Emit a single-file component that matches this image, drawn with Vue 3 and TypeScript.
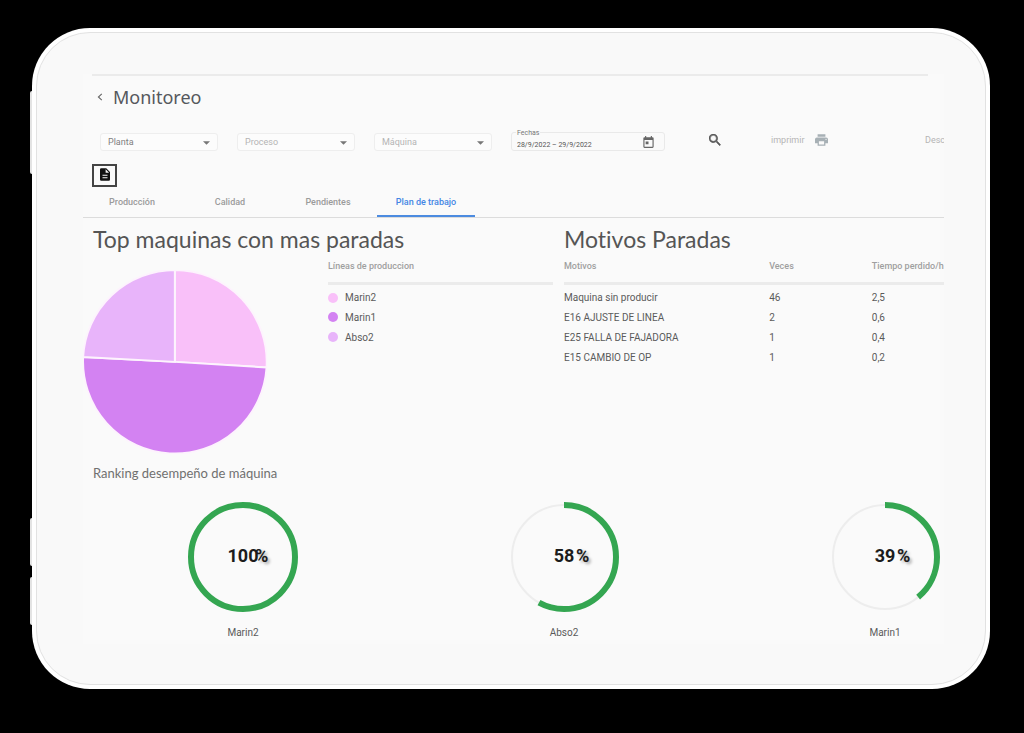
<script setup lang="ts">
import { ref } from 'vue'

interface Filter { id: string; label: string; active: boolean }
interface Slice { name: string; value: number; color: string }
interface Stop { reason: string; times: number; hours: string }
interface Rank { name: string; percent: number }

const filters: Filter[] = [
  { id: 'planta', label: 'Planta', active: true },
  { id: 'proceso', label: 'Proceso', active: false },
  { id: 'maquina', label: 'Máquina', active: false },
]
const dates = ref('28/9/2022 – 29/9/2022')

const tabs = ['Producción', 'Calidad', 'Pendientes', 'Plan de trabajo']
const activeTab = ref('Plan de trabajo')

const slices: Slice[] = [
  { name: 'Marin2', value: 93.5, color: '#f9c0f9' },
  { name: 'Marin1', value: 179.5, color: '#d382f2' },
  { name: 'Abso2', value: 87, color: '#e8b4fa' },
]
const stops: Stop[] = [
  { reason: 'Maquina sin producir', times: 46, hours: '2,5' },
  { reason: 'E16 AJUSTE DE LINEA', times: 2, hours: '0,6' },
  { reason: 'E25 FALLA DE FAJADORA', times: 1, hours: '0,4' },
  { reason: 'E15 CAMBIO DE OP', times: 1, hours: '0,2' },
]
const ranking: Rank[] = [
  { name: 'Marin2', percent: 100 },
  { name: 'Abso2', percent: 58 },
  { name: 'Marin1', percent: 39 },
]

const point = (deg: number) => {
  const a = ((deg - 90) * Math.PI) / 180
  return `${(92 + 92 * Math.cos(a)).toFixed(2)} ${(92 + 92 * Math.sin(a)).toFixed(2)}`
}
let start = 0
const pie = slices.map((s) => {
  const end = start + s.value
  const d = `M92 92L${point(start)}A92 92 0 ${s.value > 180 ? 1 : 0} 1 ${point(end)}Z`
  start = end
  return { d, color: s.color, name: s.name }
})
</script>

<template>
  <div class="device">
    <i class="key key-power"></i>
    <i class="key key-up"></i>
    <i class="key key-down"></i>
    <div class="bezel">
      <main class="screen">
        <header class="head">
          <button class="back" type="button" aria-label="Volver">
            <svg viewBox="0 0 6 8" width="6" height="8"><path d="M4.8 .8L1.4 4l3.4 3.2" fill="none" stroke="#666" stroke-width="1.1" /></svg>
          </button>
          <h1>Monitoreo</h1>
        </header>

        <form class="toolbar" @submit.prevent>
          <div v-for="f in filters" :key="f.id" class="pick" :class="{ active: f.active }">
            <select :id="f.id" :aria-label="f.label"><option>{{ f.label }}</option></select>
            <svg class="caret" viewBox="0 0 8 4" width="7" height="4"><path d="M0 0h8L4 4z" fill="currentColor" /></svg>
          </div>
          <div class="dates">
            <label for="fechas">Fechas</label>
            <input id="fechas" v-model="dates" type="text" />
            <button type="button" aria-label="Abrir calendario">
              <svg viewBox="3 1 18 21" width="11" height="12"><path fill="#666" d="M19 3h-1V1h-2v2H8V1H6v2H5a2 2 0 0 0-2 2v15a2 2 0 0 0 2 2h14a2 2 0 0 0 2-2V5a2 2 0 0 0-2-2zm0 17H5V8h14zM7 10.500h5v5H7z" /></svg>
            </button>
          </div>
          <div class="actions">
            <button class="search" type="button" aria-label="Buscar">
              <svg viewBox="3 3 18 18" width="12" height="12"><path fill="#585858" stroke="#585858" stroke-width=".8" d="M15.500 14h-.8l-.3-.3A6.500 6.500 0 1 0 13.700 14.400l.3.300v.8l5 5 1.500-1.500zm-6 0a4.500 4.500 0 1 1 0-9 4.500 4.500 0 0 1 0 9z" /></svg>
            </button>
            <button class="print" type="button">
              imprimir
              <svg viewBox="2 3 20 18" width="13" height="12"><path fill="#a7b0b5" d="M19 8H5a3 3 0 0 0-3 3v6h4v4h12v-4h4v-6a3 3 0 0 0-3-3zm-3 11H8v-5h8zm3-7a1 1 0 1 1 0-2 1 1 0 0 1 0 2zM18 3H6v4h12z" /></svg>
            </button>
            <button class="download" type="button">Descargar</button>
          </div>
        </form>

        <button class="report" type="button" aria-label="Reporte">
          <svg viewBox="4 2 16 20" width="10" height="13"><path fill="#111" d="M14 2H6a2 2 0 0 0-2 2v16a2 2 0 0 0 2 2h12a2 2 0 0 0 2-2V8zm2 16H8v-1.800h8zm0-4H8v-1.800h8zm-3-5V3.500L18.500 9z" /></svg>
        </button>

        <nav class="tabs" role="tablist">
          <button
            v-for="t in tabs" :key="t" type="button" role="tab"
            :aria-selected="t === activeTab" :class="{ on: t === activeTab }"
            @click="activeTab = t"
          >{{ t }}</button>
        </nav>

        <div class="panels">
          <section>
            <h2 class="inset">Top maquinas con mas paradas</h2>
            <div class="split">
              <svg class="pie" viewBox="0 0 184 184" role="img" aria-label="Paradas por línea">
                <path v-for="p in pie" :key="p.name" :d="p.d" :fill="p.color" stroke="#fdf3fd" stroke-width="2" />
              </svg>
              <table>
                <thead><tr><th>Líneas de produccion</th></tr></thead>
                <tbody>
                  <tr v-for="s in slices" :key="s.name">
                    <td><span class="line"><svg viewBox="0 0 10 10" width="10" height="10"><circle cx="5" cy="5" r="5" :fill="s.color" /></svg>{{ s.name }}</span></td>
                  </tr>
                </tbody>
              </table>
            </div>
          </section>
          <section>
            <h2>Motivos Paradas</h2>
            <table>
              <thead><tr><th class="wide">Motivos</th><th class="mid">Veces</th><th>Tiempo perdido/h</th></tr></thead>
              <tbody>
                <tr v-for="s in stops" :key="s.reason">
                  <td>{{ s.reason }}</td><td>{{ s.times }}</td><td>{{ s.hours }}</td>
                </tr>
              </tbody>
            </table>
          </section>
        </div>

        <h3>Ranking desempeño de máquina</h3>
        <div class="rings">
          <figure v-for="r in ranking" :key="r.name">
            <svg viewBox="0 0 110 110" width="110" height="110">
              <circle cx="55" cy="55" r="52" fill="none" stroke="#ededed" stroke-width="2" />
              <circle
                cx="55" cy="55" r="52" fill="none" stroke="#34a651" stroke-width="6"
                pathLength="100" :stroke-dasharray="`${r.percent} ${100 - r.percent}`" transform="rotate(-90 55 55)"
              />
              <text class="num" x="55" y="60" text-anchor="middle">{{ r.percent }}</text>
              <text class="pct" x="67" y="60">%</text>
            </svg>
            <figcaption>{{ r.name }}</figcaption>
          </figure>
        </div>
      </main>
    </div>
  </div>
</template>

<style>
html, body { background: #000; }
body { margin: 0; }
</style>

<style scoped>
* { box-sizing: border-box; }
button { padding: 0; border: 0; background: none; font: inherit; color: inherit; cursor: pointer; }
svg { display: block; flex: none; }
.device {
  position: relative;
  margin: 28px 34px 44px 32px;
  padding: 4px;
  border-radius: 58px;
  background: #fff;
  font-family: Roboto, "Liberation Sans", sans-serif;
  font-size: 10px;
  color: #5a5a5a;
}
.key { position: absolute; left: -2px; width: 2px; background: #e4e4e4; border-radius: 2px 0 0 2px; }
.key-power { top: 63px; height: 83px; }
.key-up { top: 490px; height: 48px; }
.key-down { top: 549px; height: 48px; }
.bezel {
  padding: 41px 41px 40px 46px;
  border: 1px solid #e2e2e2;
  border-radius: 54px;
  background: #f9f9f9;
}
.screen { overflow: hidden; background: #fafafa; padding-bottom: 3px; }
.head {
  display: flex;
  align-items: center;
  gap: 10px;
  height: 44px;
  margin: 0 16px 0 9px;
  padding-left: 5px;
  border-top: 2px solid #ebebeb;
}
h1, h2, h3 { margin: 0; font-weight: 400; white-space: nowrap; }
h1 { font-family: "Noto Sans", sans-serif; font-size: 18px; line-height: 24px; color: #55585d; }
.toolbar {
  display: grid;
  grid-template-columns: repeat(3, minmax(0, 118fr)) minmax(0, 154fr) minmax(0, 260fr);
  gap: 19px;
  align-items: end;
  margin-top: 11px;
  padding-left: 17px;
  font-size: 9px;
}
.pick { position: relative; color: #b4b4b4; }
.pick.active { color: #808080; }
select {
  appearance: none;
  display: block;
  width: 100%;
  height: 18px;
  padding: 0 18px 0 7px;
  border: 1px solid #eee;
  border-radius: 3px;
  background: #fcfcfc;
  font: inherit;
  color: inherit;
}
.caret { position: absolute; right: 8px; top: 8px; color: #777; pointer-events: none; }
.dates {
  position: relative;
  display: flex;
  align-items: center;
  height: 19px;
  padding: 0 10px 0 5px;
  border: 1px solid #e9e9e9;
  border-radius: 3px;
}
.dates label { position: absolute; left: 4px; top: -4px; padding: 0 1px; background: #fafafa; font-size: 7px; line-height: 8px; color: #777; }
.dates input { flex: 1; min-width: 0; height: 12px; margin-top: 7px; padding: 0; border: 0; background: none; font: inherit; font-size: 7px; color: #555; }
.actions { display: grid; grid-template-columns: minmax(0, 87fr) minmax(0, 154fr) minmax(0, 19fr); align-items: center; height: 22px; white-space: nowrap; color: #b5b5b5; }
.search { justify-self: start; margin-left: 25px; }
.print { display: flex; align-items: center; gap: 10px; }
.download { justify-self: start; }
.report {
  display: flex;
  justify-content: center;
  align-items: flex-start;
  width: 25px;
  height: 23px;
  margin: 13px 0 0 9px;
  padding-top: 2px;
  border: 2px solid #444;
}
.tabs { display: flex; margin-top: 1px; border-bottom: 1px solid #dcdcdc; font-size: 9px; color: #9b9b9b; }
.tabs button { flex: 0 1 98px; height: 29px; border-bottom: 2px solid transparent; font-weight: 500; white-space: nowrap; }
.tabs .on { border-color: #4c8be0; color: #4486e4; }
.panels { display: grid; grid-template-columns: minmax(0, 470fr) minmax(0, 380fr); gap: 11px; }
h2 { padding-top: 7px; font-family: Lato, sans-serif; font-size: 23px; line-height: 28px; font-variant-ligatures: none; color: #555; }
h2.inset { padding-left: 10px; }
.split { display: grid; grid-template-columns: minmax(0, 245fr) minmax(0, 225fr); align-items: start; }
.pie { width: 75%; margin-top: 17px; }
table { width: 100%; border-collapse: collapse; table-layout: fixed; }
th { height: 30px; padding: 0 0 3px; border-bottom: 3px solid #ebebeb; font-size: 9px; font-weight: 500; text-align: left; color: #9f9f9f; white-space: nowrap; }
.wide { width: 54%; }
.mid { width: 27%; }
td { height: 20px; padding: 0; white-space: nowrap; }
tbody tr:first-child td { height: 24px; padding-top: 4px; }
.line { display: flex; align-items: center; gap: 7px; }
h3 { margin-top: 9px; padding-left: 10px; font-family: Lato, sans-serif; font-size: 13px; line-height: 20px; color: #707070; }
.rings { display: flex; justify-content: space-between; margin-top: 19px; padding: 0 4px 0 105px; }
figure { margin: 0; text-align: center; }
.num { font-size: 18px; font-weight: 700; fill: #1c1c1c; }
.pct { font-size: 18px; font-weight: 700; fill: #1c1c1c; text-shadow: 2px 2px 3px rgba(0, 0, 0, .35); }
figcaption { margin-top: 13px; line-height: 16px; }
</style>
